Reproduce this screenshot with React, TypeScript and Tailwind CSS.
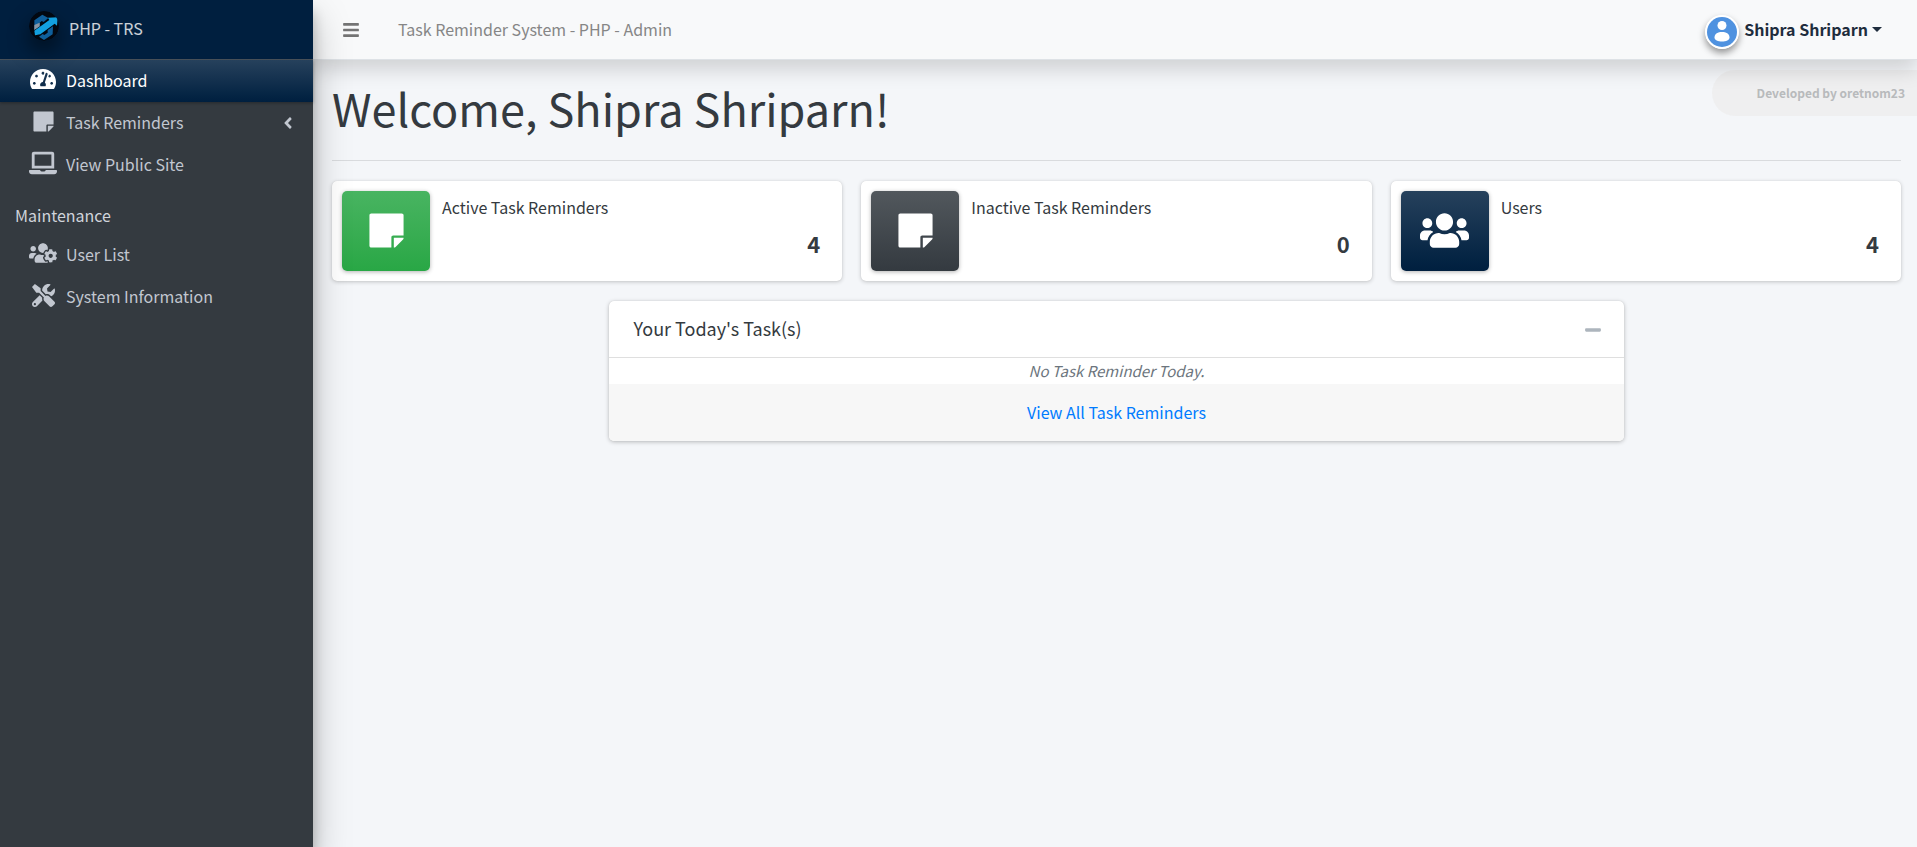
import React from "react";
import {
  FaAngleLeft,
  FaBars,
  FaLaptop,
  FaMinus,
  FaStickyNote,
  FaTachometerAlt,
  FaTools,
  FaUsers,
  FaUsersCog,
} from "react-icons/fa";

type Icon = React.ComponentType<{ className?: string }>;

function Logo() {
  return (
    <svg viewBox="0 0 90 90" className="size-[30px] rounded-full shadow-[0_10px_20px_rgba(0,0,0,0.5)]" aria-hidden="true">
      <circle cx="45" cy="45" r="45" fill="#020811" />
      <path d="M16 28 40 11 58 21 44 33 38 30 32 35 32 46 16 56Z" fill="#0f5f9b" />
      <path d="M16 42 32 35 32 46 16 57Z" fill="#8b97a3" />
      <path d="M16 59 61 27 57 20 86 19 84 44 77 38 34 70 18 73Z" fill="#12a0e0" />
      <path d="M72 46 71 70 45 87 30 77 41 69 46 72 56 65 56 57Z" fill="#0f5f9b" />
    </svg>
  );
}

function Avatar() {
  return (
    <svg viewBox="0 0 34 34" className="size-[34px] rounded-full shadow-[0_4px_7px_rgba(0,0,0,0.4)]" aria-hidden="true">
      <circle cx="17" cy="17" r="17" fill="#fff" />
      <circle cx="17" cy="17" r="15" fill="#4f92e0" />
      <circle cx="17" cy="10.500" r="4.500" fill="#fff" />
      <path d="M9.500 22.500C9.500 18.500 13 17 17 17s7.500 1.500 7.500 5.500c0 2.700-3.500 4-7.500 4s-7.500-1.300-7.500-4Z" fill="#fff" />
    </svg>
  );
}

function NavItem({ icon: I, label, size, active, expandable }: {
  icon: Icon;
  label: string;
  size: string;
  active?: boolean;
  expandable?: boolean;
}) {
  return (
    <li>
      <a
        href="#"
        className={
          "flex h-[42px] items-center pl-[25px] pr-4 " +
          (active
            ? "bg-linear-to-b from-[#26415c] to-[#001f3f] text-white shadow-[0_1px_3px_rgba(0,0,0,0.3)]"
            : "text-[#c2c7d0]")
        }
      >
        <span className="mr-[5px] flex w-9 justify-center pb-1">
          <I className={size} />
        </span>
        <span className="flex-1 pb-0.5">{label}</span>
        {expandable && <FaAngleLeft className="size-[18px]" />}
      </a>
    </li>
  );
}

function StatCard({ icon: I, label, value, tile, size }: {
  icon: Icon;
  label: string;
  value: number;
  tile: string;
  size: string;
}) {
  return (
    <div className="flex min-h-[100px] rounded-[5px] bg-white p-2.5 shadow-[0_0_1px_rgba(0,0,0,0.13),0_1px_4px_rgba(0,0,0,0.2)]">
      <span className={"flex w-[88px] items-center justify-center rounded-[5px] bg-linear-to-b pb-0.5 text-white shadow-[0_1px_4px_rgba(0,0,0,0.3)] " + tile}>
        <I className={size} />
      </span>
      <div className="flex flex-1 flex-col px-3 pt-[3px]">
        <span>{label}</span>
        <span className="mt-[7px] text-right text-[22px] leading-[32px] font-bold">{value}</span>
      </div>
    </div>
  );
}

export default function App() {
  return (
    <div className="flex min-h-screen bg-[#f4f6f9] font-['Noto_Sans_CJK_JP','Noto_Sans',sans-serif] text-[16px] leading-[26px] text-[#343a40]">
      <aside className="relative z-20 w-[313px] shrink-0 bg-[#343a40] shadow-[0_18px_35px_rgba(0,0,0,0.25),0_12px_12px_rgba(0,0,0,0.22)]">
        <a href="#" className="flex h-[60px] items-center border-b border-[#4b545c] bg-[#001f3f] pb-2 pl-[29px] text-white/80">
          <Logo />
          <span className="ml-2.5 pt-1">PHP - TRS</span>
        </a>
        <nav>
          <ul>
            <NavItem icon={FaTachometerAlt} label="Dashboard" size="size-[26px]" active />
            <NavItem icon={FaStickyNote} label="Task Reminders" size="size-[23px]" expandable />
            <NavItem icon={FaLaptop} label="View Public Site" size="size-[28px]" />
          </ul>
          <h2 className="pt-[15px] pb-[5px] pl-[15px] leading-[28px] text-[#d0d4db]">Maintenance</h2>
          <ul>
            <NavItem icon={FaUsersCog} label="User List" size="size-[28px]" />
            <NavItem icon={FaTools} label="System Information" size="size-[23px]" />
          </ul>
        </nav>
      </aside>

      <div className="flex min-w-0 flex-1 flex-col">
        <header className="relative z-10 flex h-[60px] items-center border-b border-[#dee2e6] bg-[#f8f9fa] pl-[29px] pr-[35px] text-[#868686] shadow-[0_10px_20px_rgba(0,0,0,0.15)]">
          <button type="button" aria-label="Toggle sidebar" className="text-[#747474]">
            <FaBars className="size-[18px]" />
          </button>
          <a href="#" className="ml-[38px] pb-0.5">Task Reminder System - PHP - Admin</a>
          <button type="button" className="ml-auto flex items-center text-[#1f2d3d]">
            <span className="pt-[5px]"><Avatar /></span>
            <span className="ml-[5px] pb-px font-bold">Shipra Shriparn</span>
            <svg viewBox="0 0 10 5" className="ml-1 h-[5px] w-2.5" fill="currentColor" aria-hidden="true">
              <path d="M0 0h10L5 5Z" />
            </svg>
          </button>
        </header>

        <main className="relative flex-1 pr-4 pl-[19px]">
          <div className="absolute top-2.5 right-0 flex h-[46px] items-center rounded-l-full bg-[#ededee]/80 pr-3 pl-[45px] text-[12px] font-bold text-[#b8babc]">
            Developed by oretnom23
          </div>
          <h1 className="pt-[18px] text-[45px] leading-[60px]">Welcome, Shipra Shriparn!</h1>
          <hr className="mt-[22px] border-[#d9dbde]" />

          <section className="mt-5 grid grid-cols-3 gap-[19px]">
            <StatCard icon={FaStickyNote} label="Active Task Reminders" value={4} tile="from-[#48b461] to-[#28a745]" size="size-[39px]" />
            <StatCard icon={FaStickyNote} label="Inactive Task Reminders" value={0} tile="from-[#52585d] to-[#343a40]" size="size-[39px]" />
            <StatCard icon={FaUsers} label="Users" value={4} tile="from-[#26415c] to-[#001f3f]" size="size-[49px]" />
          </section>

          <div className="mx-auto mt-5 w-2/3 px-[15px]">
            <section className="overflow-hidden rounded-[5px] bg-white shadow-[0_0_1px_rgba(0,0,0,0.13),0_1px_4px_rgba(0,0,0,0.25)]">
              <div className="flex h-[57px] items-center justify-between border-b border-[#dfdfdf] pr-[22px] pl-[25px]">
                <h3 className="pb-[3px] text-[18px]">Your Today's Task(s)</h3>
                <button type="button" aria-label="Collapse" className="pt-0.5 text-[#adb5bd]">
                  <FaMinus className="size-[18px]" />
                </button>
              </div>
              <p className="text-center text-[15px] text-[#6c757d] italic">No Task Reminder Today.</p>
              <div className="flex h-[57px] items-center justify-center bg-[#f7f7f7] pb-0.5">
                <a href="#" className="text-[#007bff]">View All Task Reminders</a>
              </div>
            </section>
          </div>
        </main>
      </div>
    </div>
  );
}
